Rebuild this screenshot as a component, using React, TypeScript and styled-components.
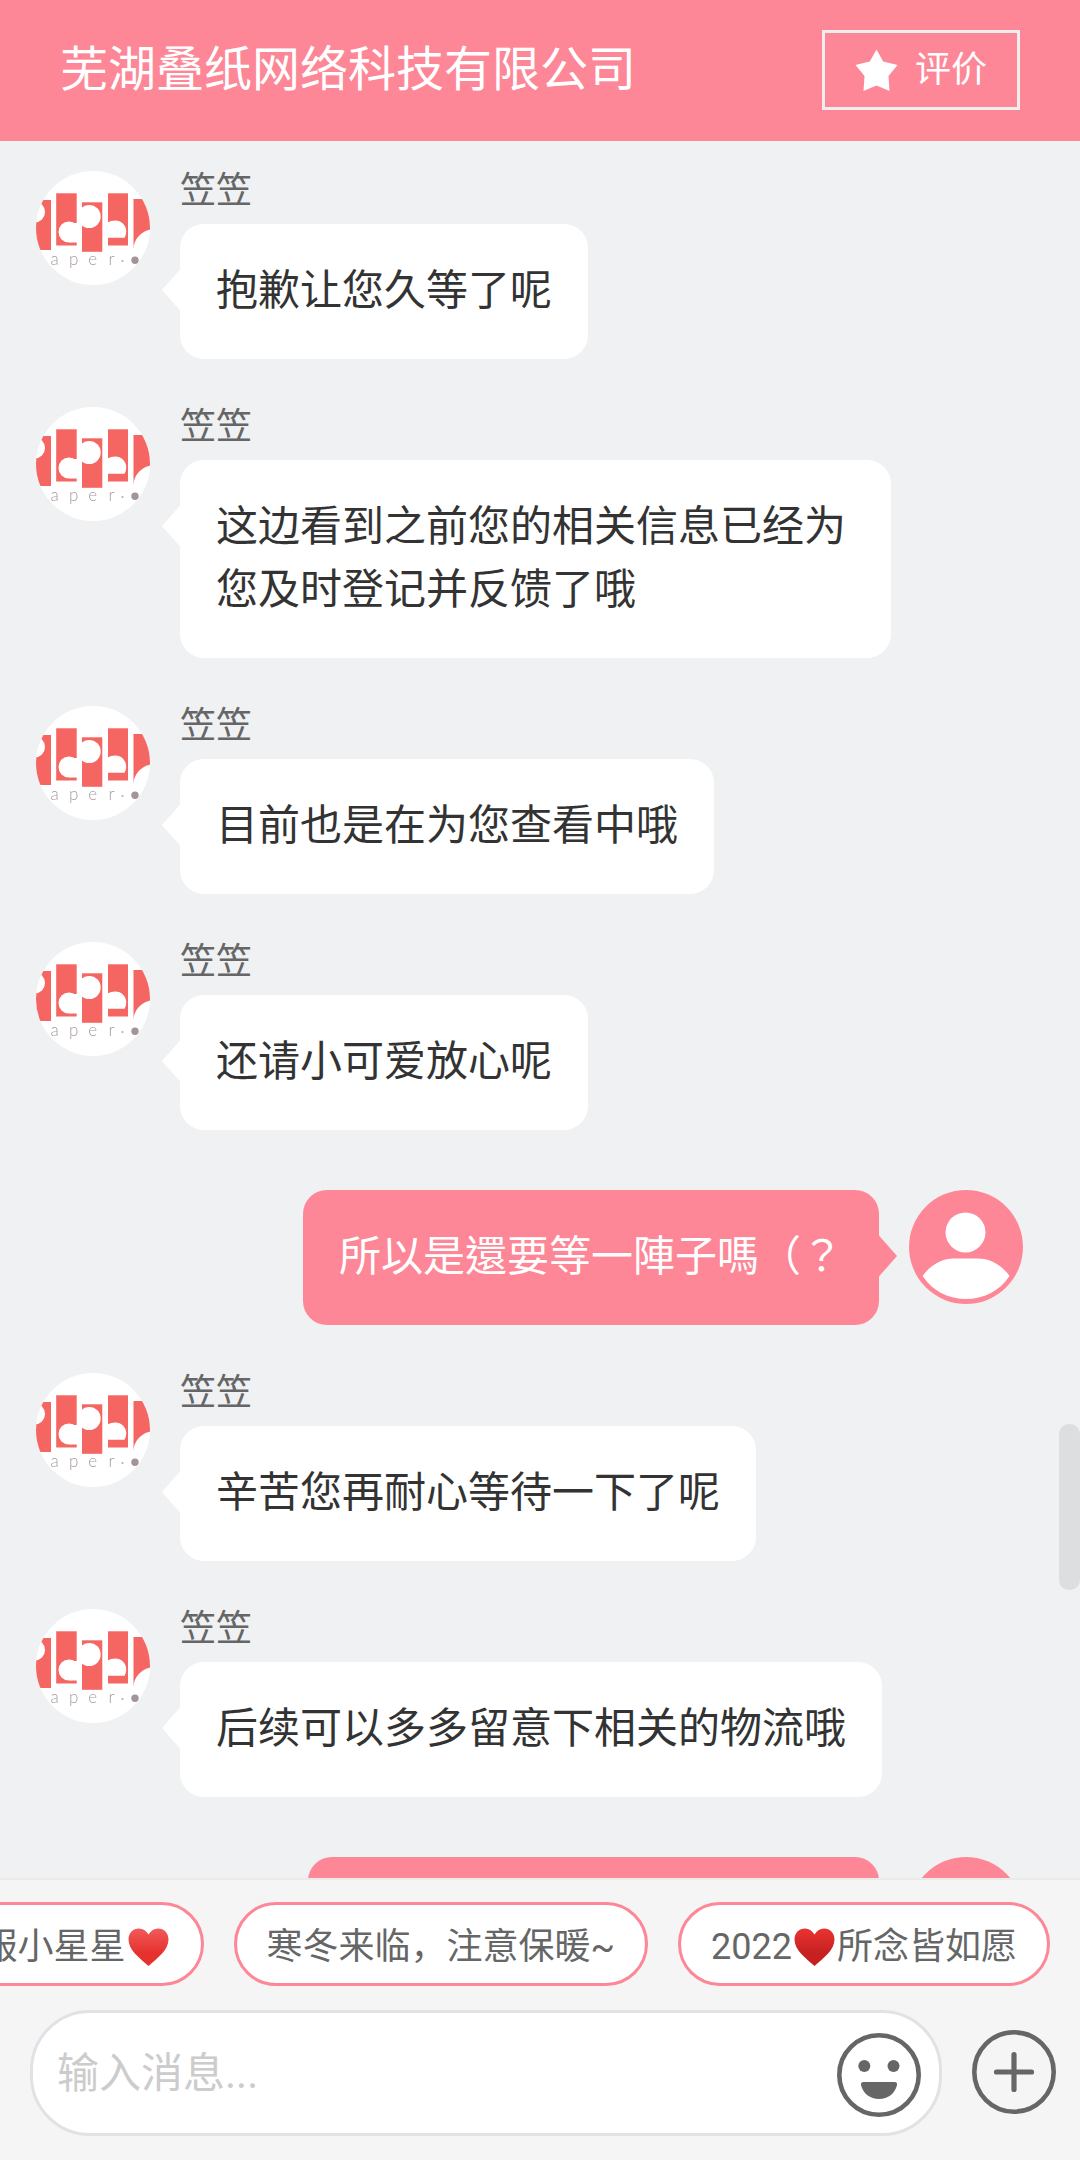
import React from "react";
import styled, { createGlobalStyle, css } from "styled-components";

const PINK = "#fd8797";

const GlobalStyle = createGlobalStyle`
  *, *::before, *::after { box-sizing: border-box; }
  body {
    margin: 0;
    font-family: Roboto, "Noto Sans CJK SC", sans-serif;
    background: #eff1f3;
  }
`;

const Screen = styled.div`
  display: flex;
  flex-direction: column;
  width: 1080px;
  height: 2160px;
  overflow: hidden;
`;

const Header = styled.header`
  display: flex;
  flex: none;
  align-items: flex-start;
  justify-content: space-between;
  height: 141px;
  padding: 30px 60px 0;
  background: ${PINK};
  color: #fff;
`;

const Title = styled.h1`
  margin: 4px 0 0;
  font-size: 48px;
  font-weight: 400;
  line-height: 72px;
`;

const RateButton = styled.button`
  display: flex;
  align-items: center;
  gap: 17px;
  width: 198px;
  height: 80px;
  padding: 0 0 0 30px;
  border: 3px solid #eee;
  background: none;
  color: #fff;
  font: inherit;
  font-size: 36px;
  line-height: 54px;
`;

const Conversation = styled.main`
  position: relative;
  display: flex;
  flex: 1;
  flex-direction: column;
  min-height: 0;
  overflow: hidden;
  padding: 30px 57px 0 36px;
`;

const Scrollbar = styled.div`
  position: absolute;
  right: 0;
  top: 1283px;
  width: 21px;
  height: 166px;
  border-radius: 10px;
  background: #dddee0;
`;

const MessageRow = styled.div<{ $mine?: boolean }>`
  display: flex;
  flex: none;
  align-items: flex-start;
  gap: 30px;
  flex-direction: ${(p) => (p.$mine ? "row-reverse" : "row")};
  margin-top: ${(p) => (p.$mine ? 60 : 48)}px;
  &:first-child { margin-top: 0; }
`;

const Avatar = styled.div`
  flex: none;
  width: 114px;
  height: 114px;
  border-radius: 50%;
  overflow: hidden;
  background: #fff;
  svg { display: block; }
`;

const MessageBody = styled.div`
  display: flex;
  flex-direction: column;
  align-items: flex-start;
`;

const Sender = styled.div`
  height: 53px;
  color: #666;
  font-size: 36px;
  line-height: 40px;
`;

const theirs = css`
  background: #fff;
  color: #333;
  &::before {
    left: -18px;
    clip-path: polygon(0 50%, 100% 0, 100% 100%);
  }
`;

const mine = css`
  background: ${PINK};
  color: #fff;
  font-family: Roboto, "Noto Sans CJK TC", sans-serif;
  &::before {
    right: -18px;
    clip-path: polygon(100% 50%, 0 0, 0 100%);
  }
`;

const Bubble = styled.div<{ $mine?: boolean; $minWidth?: number }>`
  position: relative;
  max-width: 711px;
  min-width: ${(p) => p.$minWidth ?? 0}px;
  min-height: 135px;
  padding: 35px 36px 37px;
  border-radius: 24px;
  font-size: 42px;
  line-height: 63px;
  &::before {
    content: "";
    position: absolute;
    top: 45px;
    width: 18.5px;
    height: 42px;
    background: inherit;
  }
  ${(p) => (p.$mine ? mine : theirs)}
`;

const Composer = styled.footer`
  display: flex;
  flex: none;
  flex-direction: column;
  gap: 24px;
  height: 282px;
  padding-top: 22px;
  border-top: 2px solid #ebebeb;
  background: #f5f5f5;
`;

const ChipRow = styled.div`
  display: flex;
  justify-content: flex-end;
  gap: 30px;
  padding-right: 30px;
  overflow: hidden;
`;

const Chip = styled.button`
  display: flex;
  flex: none;
  align-items: center;
  height: 84px;
  padding: 5px 30px 0;
  border: 3px solid ${PINK};
  border-radius: 42px;
  background: #fff;
  color: #666;
  font: inherit;
  font-size: 36px;
  line-height: 54px;
  white-space: nowrap;
  svg { margin: 0 2px 0 2px; }
`;

const InputRow = styled.div`
  display: flex;
  align-items: center;
  gap: 30px;
  padding: 0 24px 0 30px;
`;

const Field = styled.div`
  display: flex;
  align-items: center;
  justify-content: space-between;
  width: 912px;
  height: 126px;
  padding: 0 18px 0 24px;
  border: 3px solid #e1e2e6;
  border-radius: 60px;
  background: #fff;
`;

const Placeholder = styled.span`
  color: #ccc;
  font-size: 42px;
  line-height: 63px;
`;

const FaceSlot = styled.span`
  display: flex;
  padding-top: 4px;
`;

const PlusSlot = styled.span`
  display: flex;
  padding-bottom: 2px;
`;

const StarIcon = () => (
  <svg width="43" height="43" viewBox="0 0 43 43">
    <path
      d="M21.5 0.5 L28.2 12.4 L42.5 16 L33.5 27 L34.5 42 L21.5 36.6 L8.5 42 L9.5 27 L0.5 16 L14.8 12.4Z"
      fill="#fff"
    />
  </svg>
);

const LogoArt = styled.g`
  filter: blur(0.5px);
`;

const LogoWord = styled.g`
  fill: #a79ba0;
  font-family: Lato, sans-serif;
  font-weight: 300;
  font-size: 17px;
  text-anchor: middle;
`;

const ServiceLogo = () => (
  <svg width="114" height="114" viewBox="0 0 114 114">
    <LogoArt>
      <g fill="#f56562">
        <rect x="-4" y="29" width="19" height="50" />
        <rect x="20.2" y="22.3" width="20.5" height="52.2" />
        <rect x="46" y="31.3" width="20.3" height="49.5" />
        <rect x="72" y="22.3" width="20" height="52.2" />
        <rect x="97.5" y="28" width="20" height="50" />
      </g>
      <g fill="#fff">
        <circle cx="-1.500" cy="41" r="10.500" />
        <circle cx="33" cy="61" r="10.500" />
        <rect x="34" y="52" width="8" height="19.500" />
        <circle cx="53.200" cy="45.500" r="11.500" />
        <path d="M71.500 51.500Q75 49.500 79 49.500A11 11 0 0 1 90.200 61Q90.200 64 88.500 66.700H71.500Z" />
        <path d="M97 80V78Q99.500 62 114.500 58.500V80Z" />
      </g>
      <LogoWord>
        <text x="18.500" y="94">a</text>
        <text x="37.700" y="94">p</text>
        <text x="56.700" y="94">e</text>
        <text x="75.500" y="94">r</text>
      </LogoWord>
      <circle cx="86.500" cy="90" r="1.100" fill="#b9aeb1" />
      <circle cx="99" cy="89.200" r="3.700" fill="#a3949a" />
    </LogoArt>
  </svg>
);

const UserPicture = () => (
  <svg width="114" height="114" viewBox="0 0 114 114">
    <rect width="114" height="114" fill={PINK} />
    <circle cx="56.500" cy="42.400" r="20" fill="#fff" />
    <path d="M13.700 86C22 74 34 68.500 45 68.500H69C80 68.500 92 74 100.500 86C91 101 74 109 57 109S23 101 13.700 86Z" fill="#fff" />
  </svg>
);

const Heart = ({ id, top, bottom }: { id: string; top: string; bottom: string }) => (
  <svg width="41" height="38" viewBox="0 0 41 38">
    <defs>
      <linearGradient id={id} x1="0" y1="0" x2="0" y2="1">
        <stop offset="0" stopColor={top} />
        <stop offset="0.65" stopColor={bottom} />
      </linearGradient>
    </defs>
    <path
      d="M20.500 6.500C18 2.500 15 .5 11 .5C5 .5 .5 5 .5 11.500C.5 22 11.500 30 20.500 38C29.500 30 40.500 22 40.500 11.500C40.500 5 36 .5 30 .5C26 .5 23 2.500 20.500 6.500Z"
      fill={`url(#${id})`}
    />
  </svg>
);

const FaceIcon = () => (
  <svg width="84" height="84" viewBox="0 0 84 84" fill="#666">
    <circle cx="42" cy="42" r="39.700" fill="none" stroke="#666" strokeWidth="4.600" />
    <circle cx="27.300" cy="33" r="6" />
    <circle cx="56.500" cy="33" r="6" />
    <path d="M26.500 49H57.500Q60.500 49 60 52C58 60.500 51 66 42 66S26 60.500 24 52Q23.500 49 26.500 49Z" />
  </svg>
);

const PlusIcon = () => (
  <svg width="84" height="84" viewBox="0 0 84 84" fill="none" stroke="#666">
    <circle cx="42" cy="42" r="39.700" strokeWidth="4.600" />
    <path d="M42 24.500V59.500M24.500 42H59.500" strokeWidth="5.200" strokeLinecap="round" />
  </svg>
);

type Message = { text: string; mine?: boolean; minWidth?: number };

const messages: Message[] = [
  { text: "抱歉让您久等了呢" },
  { text: "这边看到之前您的相关信息已经为您及时登记并反馈了哦" },
  { text: "目前也是在为您查看中哦" },
  { text: "还请小可爱放心呢" },
  { text: "所以是還要等一陣子嗎（？", mine: true },
  { text: "辛苦您再耐心等待一下了呢" },
  { text: "后续可以多多留意下相关的物流哦" },
  { text: "", mine: true, minWidth: 571 },
];

export default function App() {
  return (
    <Screen lang="zh-CN">
      <GlobalStyle />
      <Header>
        <Title>芜湖叠纸网络科技有限公司</Title>
        <RateButton>
          <StarIcon />
          评价
        </RateButton>
      </Header>
      <Conversation>
        {messages.map((m, i) =>
          m.mine ? (
            <MessageRow key={i} $mine lang="zh-TW">
              <Avatar>
                <UserPicture />
              </Avatar>
              <Bubble $mine $minWidth={m.minWidth}>{m.text}</Bubble>
            </MessageRow>
          ) : (
            <MessageRow key={i}>
              <Avatar>
                <ServiceLogo />
              </Avatar>
              <MessageBody>
                <Sender>笠笠</Sender>
                <Bubble>{m.text}</Bubble>
              </MessageBody>
            </MessageRow>
          )
        )}
        <Scrollbar />
      </Conversation>
      <Composer>
        <ChipRow>
          <Chip>
            服小星星
            <Heart id="heartLight" top="#f25a5a" bottom="#e5322f" />
          </Chip>
          <Chip>寒冬来临，注意保暖~</Chip>
          <Chip>
            2022
            <Heart id="heartDeep" top="#e93431" bottom="#c62021" />
            所念皆如愿
          </Chip>
        </ChipRow>
        <InputRow>
          <Field>
            <Placeholder>输入消息...</Placeholder>
            <FaceSlot>
              <FaceIcon />
            </FaceSlot>
          </Field>
          <PlusSlot>
            <PlusIcon />
          </PlusSlot>
        </InputRow>
      </Composer>
    </Screen>
  );
}
